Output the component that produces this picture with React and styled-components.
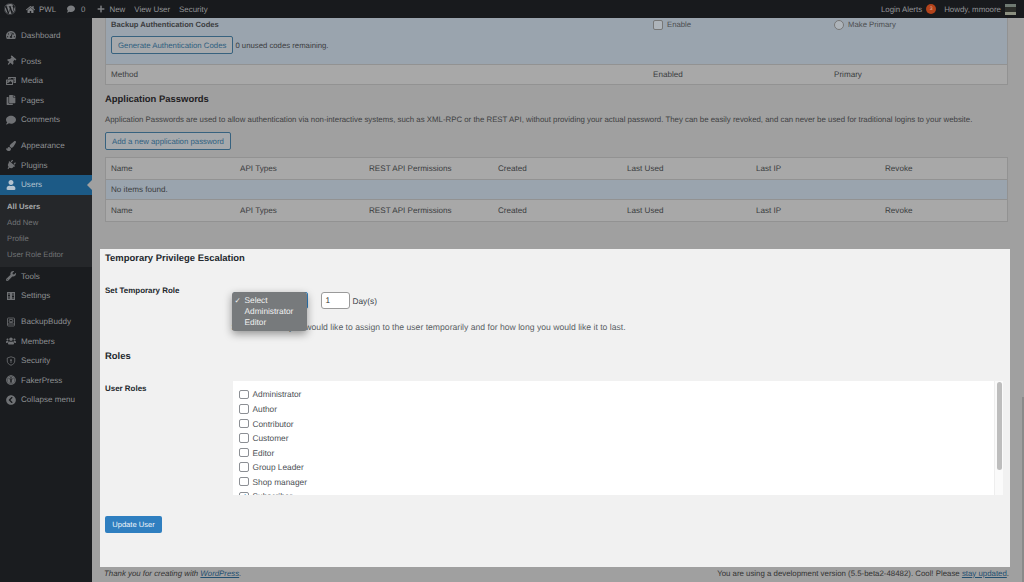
import React from "react";
import styled, { createGlobalStyle } from "styled-components";
import {
  FaWordpress, FaHome, FaComment, FaPlus, FaTachometerAlt, FaThumbtack, FaPhotoVideo, FaCopy,
  FaPaintBrush, FaPlug, FaUser, FaWrench, FaUsers, FaChevronCircleLeft, FaUniversalAccess,
} from "react-icons/fa";

const GlobalStyle = createGlobalStyle`
  html, body {
    margin: 0;
    padding: 0;
    height: 100%;
    overflow: hidden;
    background: #a0a0a0;
    font-family: "Liberation Sans", Arial, sans-serif;
    font-size: 8px;
    color: #3a3c3e;
    text-rendering: geometricPrecision;
  }
`;

const Page = styled.div`
  width: 1024px;
  height: 582px;
  display: grid;
  grid-template-columns: 92px 1fr;
  grid-template-rows: 18px 1fr;
  overflow: hidden;
`;

const TopBar = styled.div`
  grid-column: 1 / 3;
  background: #181a1d;
  color: #929497;
  display: flex;
  align-items: center;
  padding: 0 8px 0 4px;
  font-size: 7.9px;
  position: relative;
  z-index: 2;
`;

const BarItem = styled.span`
  display: flex;
  align-items: center;
  gap: ${(p) => p.$inner ?? 4}px;
  margin-right: ${(p) => p.$gap ?? 9}px;
  svg { color: #7b7d80; }
`;

const Spacer = styled.div`
  flex: 1;
`;

const Badge = styled.span`
  width: 10px;
  height: 10px;
  border-radius: 50%;
  background: #b3431b;
  color: #e2b9a8;
  font-size: 5px;
  display: flex;
  align-items: center;
  justify-content: center;
`;

const Avatar = styled.span`
  width: 11px;
  height: 11px;
  background: linear-gradient(#6f7a72 0 30%, #2c2e2a 30% 70%, #8b8f80 70%);
`;

const Sidebar = styled.nav`
  background: #1a1c1f;
  color: #8e9093;
  padding-top: 7.5px;
  font-size: 8.1px;
`;

const MenuItem = styled.div`
  height: 19.5px;
  display: flex;
  align-items: center;
  gap: 5px;
  padding-left: 6px;
  margin-top: ${(p) => (p.$sep ? 6.5 : 0)}px;
  position: relative;
  background: ${(p) => (p.$active ? "#1c5a86" : "transparent")};
  color: ${(p) => (p.$active ? "#b4c4d0" : "inherit")};
  svg {
    width: 10px;
    height: 10px;
    flex: none;
    color: ${(p) => (p.$active ? "#b4c4d0" : "#6f7174")};
    transform: ${(p) => (p.$tilt ? "rotate(40deg)" : "none")};
  }
  ${(p) =>
    p.$active &&
    `&::after {
      content: "";
      position: absolute;
      right: 0;
      top: 5px;
      border: 5px solid transparent;
      border-right-color: #a0a0a0;
      border-left-width: 0;
    }`}
`;

const SubMenu = styled.div`
  background: #25272a;
  padding: 4px 0 4px;
`;

const SubItem = styled.div`
  height: 16px;
  line-height: 16px;
  padding-left: 7px;
  font-size: 7.7px;
  color: ${(p) => (p.$current ? "#a8aaac" : "#727477")};
  font-weight: ${(p) => (p.$current ? 700 : 400)};
`;

const Main = styled.main`
  position: relative;
  overflow: hidden;
  padding: 0 16px 0 13px;
`;

const TwoFactorBox = styled.section`
  border: 1px solid #929292;
  border-top: 0;
  background: #a8a8a8;
`;

const BlueRow = styled.div`
  background: #9aa4ae;
  height: 45px;
  padding: 1px 5px 0;
  display: grid;
  grid-template-columns: 542px 181px 1fr;
`;

const MutedTitle = styled.div`
  font-weight: 700;
  font-size: 7.6px;
  line-height: 11px;
  margin-top: 0;
`;

const Control = styled.label`
  display: flex;
  align-items: center;
  gap: 4px;
  height: 11px;
  font-size: 7.75px;
  color: #4c4e50;
`;

const FakeCheck = styled.span`
  width: 8px;
  height: 8px;
  border: 1px solid #777;
  border-radius: ${(p) => (p.$round ? "50%" : "2px")};
  background: #aeb4ba;
`;

const OutlineButton = styled.button`
  display: block;
  height: 18px;
  padding: 0 6px;
  border: 1px solid #37627f;
  border-radius: 2px;
  background: #a6a9ac;
  color: #2f5f80;
  font: 7.8px "Liberation Sans", Arial, sans-serif;
  text-rendering: geometricPrecision;
`;

const ButtonLine = styled.div`
  display: flex;
  align-items: center;
  gap: 2px;
  margin-top: 6px;
  font-size: 7.75px;
`;

const MethodRow = styled.div`
  height: 20px;
  padding: 0 5px 1px;
  box-sizing: border-box;
  display: grid;
  grid-template-columns: 542px 181px 1fr;
  align-items: center;
  border-top: 1px solid #929292;
  font-size: 8.1px;
`;

const SectionTitle = styled.h2`
  margin: ${(p) => p.$top || 0}px 0 0;
  font-size: 9.45px;
  line-height: 12px;
  font-weight: 700;
  color: #1f2123;
`;

const Paragraph = styled.p`
  margin: 8px 0 7px;
  font-size: 7.85px;
  line-height: 11px;
  color: #3f4143;
  white-space: nowrap;
`;

const AppTable = styled.div`
  margin-top: 7px;
  border: 1px solid #929292;
  background: #a8a8a8;
`;

const AppRow = styled.div`
  display: grid;
  grid-template-columns: repeat(7, 129px);
  height: 21px;
  align-items: center;
  padding: 0 5px;
  font-size: 8.1px;
  background: ${(p) => (p.$blue ? "#9aa4ae" : "transparent")};
  border-top: ${(p) => (p.$blue ? "1px solid #929292" : "0")};
  border-bottom: ${(p) => (p.$blue ? "1px solid #929292" : "0")};
  box-sizing: border-box;
`;

const Panel = styled.section`
  margin: 27px -2px 0 -5px;
  height: 318px;
  padding: 4px 5px 0;
  box-sizing: border-box;
  background: #f1f1f1;
  color: #3c434a;
`;

const PanelTitle = styled.h2`
  margin: ${(p) => p.$top || 0}px 0 0;
  font-size: 9.45px;
  line-height: 12px;
  color: #23282d;
`;

const FieldRow = styled.div`
  display: grid;
  grid-template-columns: 127.5px 1fr;
  margin-top: ${(p) => p.$top}px;
`;

const FieldLabel = styled.div`
  font-weight: 700;
  font-size: 7.95px;
  line-height: 11px;
  color: #23282d;
`;

const RoleControls = styled.div`
  position: relative;
  display: flex;
  align-items: flex-start;
  gap: 13px;
  height: 17px;
  margin-top: 7px;
`;

const SelectField = styled.div`
  width: 75px;
  height: 17px;
  box-sizing: border-box;
  border: 1px solid #2f7fc0;
  border-radius: 2px;
  background: #fff;
`;

const NumberField = styled.div`
  width: 29px;
  height: 17px;
  box-sizing: border-box;
  border: 1px solid #9a9a9a;
  border-radius: 3px;
  background: #fff;
  padding: 0 4px;
  font-size: 8.3px;
  line-height: 15px;
  color: #333;
  position: relative;
  &::after {
    content: "";
    position: absolute;
    right: 2px;
    top: 4px;
    width: 17px;
    height: 8px;
    background-image: radial-gradient(#cfcfcf 0.5px, transparent 0.6px);
    background-size: 2px 2px;
  }
`;

const DayLabel = styled.span`
  margin-left: -10px;
  margin-top: 4px;
  font-size: 8.3px;
  line-height: 11px;
`;

const DropMenu = styled.ul`
  position: absolute;
  left: -1px;
  top: 0;
  width: 75px;
  height: 39px;
  margin: 0;
  padding: 3px 0 0;
  box-sizing: border-box;
  list-style: none;
  background: #777a7c;
  border-radius: 3px;
  box-shadow: 0 3px 9px rgba(0, 0, 0, 0.4);
  color: #f0f0f0;
  font-size: 8.3px;
`;

const DropOption = styled.li`
  height: 11px;
  line-height: 11px;
  padding-left: 13px;
  position: relative;
  ${(p) =>
    p.$checked &&
    `&::before {
      content: "✓";
      position: absolute;
      left: 3px;
      font-size: 7.5px;
    }`}
`;

const Description = styled.p`
  margin: 13.5px 0 0 -1px;
  font-size: 8.65px;
  line-height: 11px;
  color: #5a5f64;
  white-space: nowrap;
`;

const RoleBox = styled.div`
  height: 114px;
  margin-right: 2px;
  margin-top: -2px;
  background: #fff;
  overflow: hidden;
  position: relative;
  padding-top: 6.7px;
  box-sizing: border-box;
`;

const RoleOption = styled.label`
  display: flex;
  align-items: center;
  gap: 4px;
  height: 14.55px;
  padding-left: 6.5px;
  font-size: 8.3px;
  color: #4c5055;
`;

const RoleCheck = styled.span`
  width: 7.5px;
  height: 7.5px;
  box-sizing: content-box;
  border: 1px solid #8c8f94;
  border-radius: 2px;
  background: #fff;
  color: #2f7fc0;
  font-size: 8px;
  line-height: 8px;
  text-align: center;
  flex: none;
`;

const ScrollTrack = styled.div`
  position: absolute;
  right: 0;
  top: 0;
  bottom: 0;
  width: 9px;
  background: #fafafa;
  border-left: 1px solid #eee;
  box-sizing: border-box;
  &::after {
    content: "";
    position: absolute;
    left: 2px;
    top: 1px;
    width: 5px;
    height: 88px;
    border-radius: 3px;
    background: #bdbdbd;
  }
`;

const SaveButton = styled.button`
  display: block;
  margin-top: 21.5px;
  height: 17px;
  width: 57px;
  padding: 0;
  border: 0;
  border-radius: 2px;
  background: #2f7fc0;
  color: #eef5fa;
  font: 7.6px "Liberation Sans", Arial, sans-serif;
  text-rendering: geometricPrecision;
`;

const Footer = styled.footer`
  display: flex;
  justify-content: space-between;
  margin: 0 -1px 0 -1px;
  padding-top: 1px;
  font-size: 7.85px;
  line-height: 11px;
  color: #333;
`;

const FooterNote = styled.span`
  font-style: ${(p) => (p.$italic ? "italic" : "normal")};
  a { color: #234f70; text-decoration: underline; }
`;

const PageScroll = styled.div`
  position: absolute;
  right: 0;
  top: 379px;
  bottom: 0;
  width: 2px;
  background: #8a8a8a;
`;

const SettingsIcon = () => (
  <svg viewBox="0 0 20 20" fill="currentColor">
    <path fillRule="evenodd" d="M2 2h16v16H2zM5 4v4H4v2h1v6h2v-6h1V8H7V4zm8 0v6h-1v2h1v4h2v-4h1v-2h-1V4z" />
  </svg>
);

const BackupIcon = () => (
  <svg viewBox="0 0 20 20" fill="none" stroke="currentColor" strokeWidth="1.6">
    <rect x="3" y="2" width="14" height="16" rx="1.5" />
    <path d="M3 14h14" />
    <rect x="6.5" y="5" width="7" height="6" rx="1" />
    <path d="M8 8.5c1 1 3 1 4 0" />
  </svg>
);

const ShieldIcon = () => (
  <svg viewBox="0 0 20 20" fill="none" stroke="currentColor" strokeWidth="1.6">
    <path d="M10 1.5 17.5 4v6c0 4-3 7-7.5 8.5C5.500 17 2.500 14 2.500 10V4z" />
    <path d="M10 6v5M8 8.500h4M10 11v3" />
  </svg>
);

const menuTop = [
  { label: "Dashboard", Icon: FaTachometerAlt },
  { label: "Posts", Icon: FaThumbtack, sep: true, tilt: true },
  { label: "Media", Icon: FaPhotoVideo },
  { label: "Pages", Icon: FaCopy },
  { label: "Comments", Icon: FaComment },
  { label: "Appearance", Icon: FaPaintBrush, sep: true },
  { label: "Plugins", Icon: FaPlug, tilt: true },
  { label: "Users", Icon: FaUser, active: true },
];

const menuBottom = [
  { label: "Tools", Icon: FaWrench },
  { label: "Settings", Icon: SettingsIcon },
  { label: "BackupBuddy", Icon: BackupIcon, sep: true },
  { label: "Members", Icon: FaUsers },
  { label: "Security", Icon: ShieldIcon },
  { label: "FakerPress", Icon: FaUniversalAccess },
  { label: "Collapse menu", Icon: FaChevronCircleLeft },
];

const columns = ["Name", "API Types", "REST API Permissions", "Created", "Last Used", "Last IP", "Revoke"];
const roles = ["Administrator", "Author", "Contributor", "Customer", "Editor", "Group Leader", "Shop manager"];

const App = () => {
  return (
    <Page>
      <GlobalStyle />
      <TopBar>
        <BarItem $gap={10}><FaWordpress size={12} /></BarItem>
        <BarItem $gap={11}><FaHome size={9} />PWL</BarItem>
        <BarItem $gap={11} $inner={6}><FaComment size={8} />0</BarItem>
        <BarItem $gap={9} $inner={5}><FaPlus size={8} />New</BarItem>
        <BarItem $gap={9}>View User</BarItem>
        <BarItem>Security</BarItem>
        <Spacer />
        <BarItem $gap={8}>Login Alerts<Badge>3</Badge></BarItem>
        <BarItem $gap={0}>Howdy, mmoore<Avatar /></BarItem>
      </TopBar>

      <Sidebar>
        {menuTop.map(({ label, Icon, sep, active, tilt }) => (
          <MenuItem key={label} $sep={sep} $active={active} $tilt={tilt}><Icon />{label}</MenuItem>
        ))}
        <SubMenu>
          <SubItem $current>All Users</SubItem>
          <SubItem>Add New</SubItem>
          <SubItem>Profile</SubItem>
          <SubItem>User Role Editor</SubItem>
        </SubMenu>
        {menuBottom.map(({ label, Icon, sep }) => (
          <MenuItem key={label} $sep={sep}><Icon />{label}</MenuItem>
        ))}
      </Sidebar>

      <Main>
        <TwoFactorBox>
          <BlueRow>
            <div>
              <MutedTitle>Backup Authentication Codes</MutedTitle>
              <ButtonLine>
                <OutlineButton>Generate Authentication Codes</OutlineButton>
                0 unused codes remaining.
              </ButtonLine>
            </div>
            <Control><FakeCheck />Enable</Control>
            <Control><FakeCheck $round />Make Primary</Control>
          </BlueRow>
          <MethodRow><span>Method</span><span>Enabled</span><span>Primary</span></MethodRow>
        </TwoFactorBox>

        <SectionTitle $top={9}>Application Passwords</SectionTitle>
        <Paragraph>
          Application Passwords are used to allow authentication via non-interactive systems, such as XML-RPC or the REST API, without providing your actual password. They can be easily revoked, and can never be used for traditional logins to your website.
        </Paragraph>
        <OutlineButton>Add a new application password</OutlineButton>

        <AppTable>
          <AppRow>{columns.map((c) => <span key={c}>{c}</span>)}</AppRow>
          <AppRow $blue><span>No items found.</span></AppRow>
          <AppRow>{columns.map((c) => <span key={c}>{c}</span>)}</AppRow>
        </AppTable>

        <Panel>
          <PanelTitle>Temporary Privilege Escalation</PanelTitle>
          <FieldRow $top={19.5}>
            <FieldLabel>Set Temporary Role</FieldLabel>
            <div>
              <RoleControls>
                <SelectField />
                <NumberField>1</NumberField>
                <DayLabel>Day(s)</DayLabel>
                <DropMenu>
                  <DropOption $checked>Select</DropOption>
                  <DropOption>Administrator</DropOption>
                  <DropOption>Editor</DropOption>
                </DropMenu>
              </RoleControls>
              <Description>
                Select the role you would like to assign to the user temporarily and for how long you would like it to last.
              </Description>
            </div>
          </FieldRow>
          <PanelTitle $top={18}>Roles</PanelTitle>
          <FieldRow $top={19.5}>
            <FieldLabel>User Roles</FieldLabel>
            <RoleBox>
              {roles.map((r) => (
                <RoleOption key={r}><RoleCheck />{r}</RoleOption>
              ))}
              <RoleOption><RoleCheck>✓</RoleCheck>Subscriber</RoleOption>
              <ScrollTrack />
            </RoleBox>
          </FieldRow>
          <SaveButton>Update User</SaveButton>
        </Panel>

        <Footer>
          <FooterNote $italic>Thank you for creating with <a>WordPress</a>.</FooterNote>
          <FooterNote>You are using a development version (5.5-beta2-48482). Cool! Please <a>stay updated</a>.</FooterNote>
        </Footer>
        <PageScroll />
      </Main>
    </Page>
  );
};

export default App;
